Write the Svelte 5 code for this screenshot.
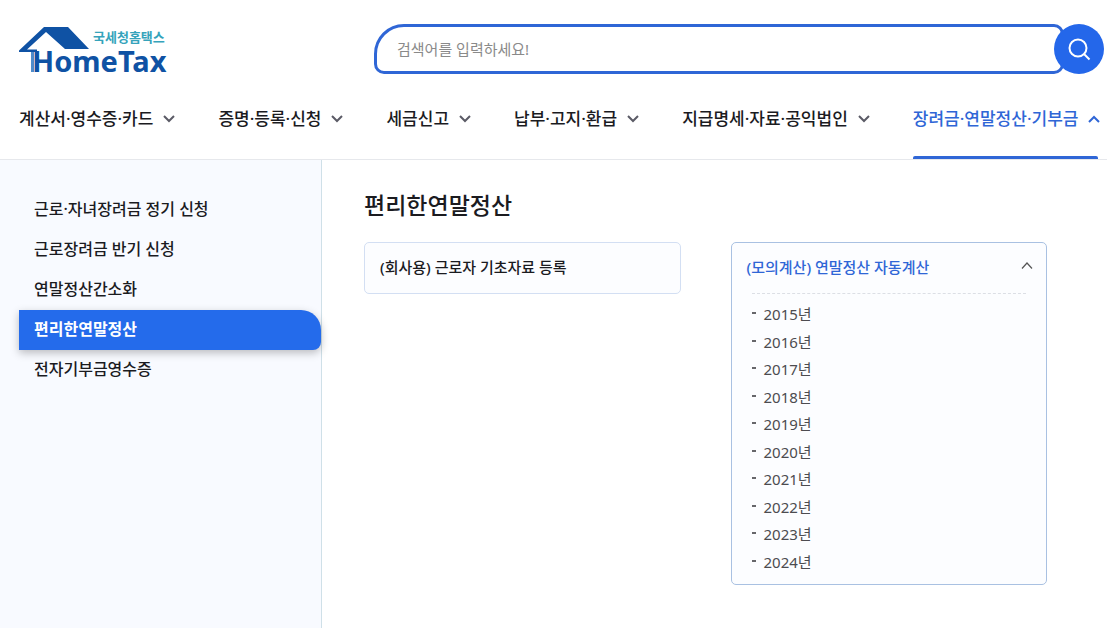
<script>
  const menus = [
    { label: '계산서·영수증·카드' },
    { label: '증명·등록·신청' },
    { label: '세금신고' },
    { label: '납부·고지·환급' },
    { label: '지급명세·자료·공익법인' },
    { label: '장려금·연말정산·기부금', active: true }
  ];
  const side = [
    '근로·자녀장려금 정기 신청',
    '근로장려금 반기 신청',
    '연말정산간소화',
    '편리한연말정산',
    '전자기부금영수증'
  ];
  const current = '편리한연말정산';
  const years = Array.from({ length: 10 }, (_, i) => 2015 + i);
  let open = $state(true);
  let query = $state('');
</script>

<header>
  <div class="top">
    <a class="logo" href="#home" aria-label="국세청홈택스 HomeTax">
      <svg width="155" height="50" viewBox="0 0 155 50">
        <path fill="#0f52a4" d="M0 26.500 25 3H49L70 25H46L27 8 8 25.500H18V28H0Z" />
        <path fill="#4f8ccb" d="M12 28H15V48H12Z" />
        <text class="ko" x="74" y="18">국세청홈택스</text>
        <text class="en" x="13" y="48">HomeTax</text>
      </svg>
    </a>
    <form class="search" onsubmit={(e) => e.preventDefault()}>
      <input type="text" aria-label="검색어" placeholder="검색어를 입력하세요!" bind:value={query} />
      <button type="submit" aria-label="검색">
        <svg width="24" height="24" viewBox="0 0 24 24" fill="none" stroke="#fff" stroke-width="2">
          <circle cx="11" cy="11" r="8.5" />
          <path d="M17 17 22.500 22.500" />
        </svg>
      </button>
    </form>
  </div>
  <nav>
    {#each menus as m}
      <a href="#menu" class:active={m.active}>
        {m.label}
        <svg width="12" height="8" viewBox="0 0 12 8" fill="none" stroke-width="2">
          <path d={m.active ? 'M1 7 6 2 11 7' : 'M1 1 6 6 11 1'} />
        </svg>
      </a>
    {/each}
  </nav>
</header>

<div class="body">
  <aside>
    <ul>
      {#each side as s}
        <li><a href="#side" class:current={s === current}>{s}</a></li>
      {/each}
    </ul>
  </aside>
  <main>
    <h1>편리한연말정산</h1>
    <div class="cards">
      <section class="card">
        <a class="head" href="#register">(회사용) 근로자 기초자료 등록</a>
      </section>
      <section class="card opened">
        <button class="head" aria-expanded={open} onclick={() => (open = !open)}>
          (모의계산) 연말정산 자동계산
          <svg width="12" height="8" viewBox="0 0 12 8" fill="none" stroke="#555" stroke-width="1.2">
            <path d={open ? 'M1 6.500 6 1 11 6.500' : 'M1 1 6 6.500 11 1'} />
          </svg>
        </button>
        {#if open}
          <ul>
            {#each years as y}
              <li><a href="#year">{y}년</a></li>
            {/each}
          </ul>
        {/if}
      </section>
    </div>
  </main>
</div>

<style>
  :global(body) {
    margin: 0;
    background: #fff;
  }
  :global(#app) {
    min-height: 100vh;
    display: flex;
    flex-direction: column;
    font-family: 'Noto Sans', 'Noto Sans CJK KR', sans-serif;
    font-size: 15px;
    color: #1b1b1f;
  }
  * {
    box-sizing: border-box;
  }
  a {
    color: inherit;
    text-decoration: none;
  }
  ul {
    list-style: none;
    margin: 0;
    padding: 0;
  }
  button,
  input {
    font: inherit;
  }
  header {
    border-bottom: 1px solid #e6e8ec;
  }
  .top {
    display: flex;
    align-items: center;
    padding: 24px 3px 0 19px;
  }
  .logo {
    width: 355px;
    flex: none;
  }
  .logo svg {
    display: block;
    overflow: visible;
  }
  .ko {
    font-family: 'Noto Sans CJK KR', sans-serif;
    font-size: 13px;
    font-weight: 700;
    fill: #35a3bb;
  }
  .en {
    font-family: 'Noto Sans', sans-serif;
    font-size: 29px;
    font-weight: 700;
    fill: #0f52a4;
  }
  .search {
    flex: 1;
    display: flex;
    height: 50px;
  }
  .search input {
    flex: 1;
    min-width: 0;
    border: 3px solid #2f66d6;
    border-radius: 30px 10px 10px 10px;
    padding: 0 20px;
    outline: none;
    background: #fff;
  }
  .search input::placeholder {
    color: #8a8a8a;
  }
  .search button {
    width: 50px;
    margin-left: -10px;
    position: relative;
    border: 0;
    padding: 0;
    border-radius: 50%;
    background: #2467ea;
    display: grid;
    place-items: center;
  }
  nav {
    display: flex;
    gap: 43px;
    padding: 0 9px 0 19px;
    font-size: 17px;
    font-weight: 500;
    white-space: nowrap;
  }
  nav a {
    position: relative;
    display: flex;
    align-items: center;
    gap: 10px;
    height: 85px;
    padding-top: 2px;
  }
  nav svg {
    margin-top: 2px;
    stroke: #5b5b66;
  }
  nav .active {
    color: #2f66d6;
  }
  nav .active svg {
    stroke: #2f66d6;
  }
  nav .active::after {
    content: '';
    position: absolute;
    left: 0;
    right: 2px;
    bottom: 0;
    height: 3px;
    border-radius: 2px 2px 0 0;
    background: #2f66d6;
  }
  .body {
    flex: 1;
    display: flex;
  }
  aside {
    width: 322px;
    flex: none;
    padding: 30px 0 30px 19px;
    background: #f8faff;
    border-right: 1px solid #cfe0e8;
    font-size: 16px;
    font-weight: 500;
  }
  aside a {
    display: block;
    padding: 0 15px 2px;
    line-height: 38px;
  }
  aside .current {
    color: #fff;
    font-weight: 700;
    background: #246beb;
    border-radius: 0 20px 8px 0;
    box-shadow: 0 3px 8px rgba(0, 0, 0, 0.25);
  }
  main {
    flex: 1;
    padding: 26px 60px 43px 42px;
  }
  h1 {
    margin: 0 0 18px;
    font-size: 23px;
    line-height: 38px;
    font-weight: 500;
  }
  .cards {
    display: grid;
    grid-template-columns: 1fr 1fr;
    gap: 50px;
    align-items: start;
  }
  .card {
    border: 1px solid #d3dff3;
    border-radius: 5px;
    background: #fcfdff;
  }
  .opened {
    border-color: #a9c1e2;
  }
  .head {
    display: flex;
    align-items: center;
    justify-content: space-between;
    width: 100%;
    height: 50px;
    padding: 0 13px 4px 15px;
    border: 0;
    background: none;
    font-weight: 500;
    color: inherit;
    text-align: left;
  }
  .opened .head {
    color: #2f66d6;
  }
  .card ul {
    margin: 0 20px;
    padding: 6px 0 9px;
    border-top: 1px dashed #dcdfe5;
    color: #4c4c50;
  }
  .card li {
    display: flex;
    gap: 8px;
    padding: 3px 0 2px;
    line-height: 1.5;
  }
  .card li::before {
    content: '';
    width: 4px;
    height: 2px;
    margin-top: 9px;
    background: #66666a;
  }
</style>
